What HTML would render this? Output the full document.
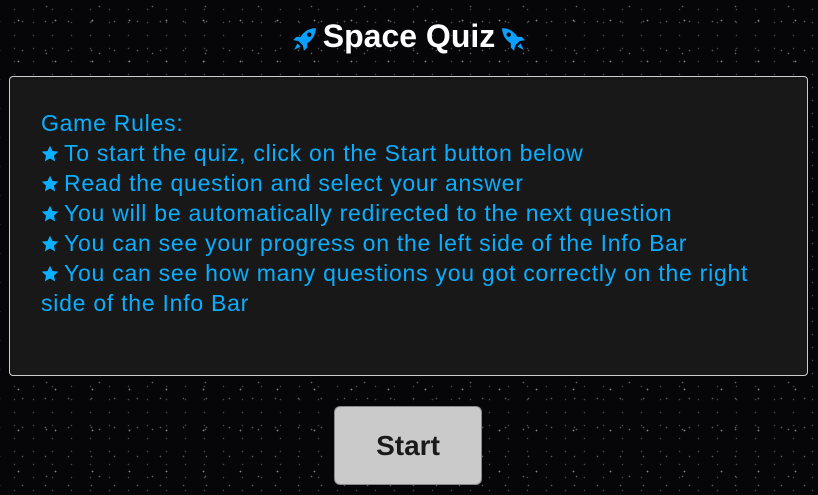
<!DOCTYPE html>
<html><head><meta charset="utf-8"><style>
html,body{margin:0;width:818px;height:495px;overflow:hidden;background:#060608;font-family:"Liberation Sans",Arial,sans-serif;position:relative}
.bg{position:absolute;inset:0;background-image:
radial-gradient(circle,#fff 0.7px,transparent 1px),
radial-gradient(circle,#aaa 0.6px,transparent 1px),
radial-gradient(circle,#888 0.5px,transparent 1px),
radial-gradient(circle,#bbb 0.6px,transparent 1px);
background-size:37px 41px,23px 29px,19px 13px,53px 47px;
background-position:0 0,11px 7px,5px 3px,20px 30px;opacity:.5}
h1{position:absolute;top:14px;left:0;width:818px;text-align:center;margin:0;color:#fff;font-size:32px;font-weight:bold;line-height:44px}
h1 svg{vertical-align:middle;margin:0 5px}
.box{position:absolute;left:9px;top:76px;width:797px;height:298px;background:#181818;border:1px solid #ccc;border-radius:4px}
.txt{position:absolute;left:31px;top:31px;width:735px;color:#0aaeff;font-size:23px;letter-spacing:0.75px;line-height:30px}
.star{display:inline-block;width:18px;height:18px;vertical-align:-2px;margin-right:5px}
.btn{position:absolute;left:334px;top:406px;width:146px;height:77px;background:#cacaca;border:1px solid #888;border-radius:6px;text-align:center;line-height:77px;font-size:28px;font-weight:bold;color:#1a1a1a}
</style></head><body>
<div class="bg"></div>
<h1><svg width="26" height="26" viewBox="0 0 24 24"><path fill="#0aa0ff" d="M22 2c-6 0-11 3-14 8l-4 0-3 3 5 1 4 4 1 5 3-3 0-4c5-3 8-8 8-14z"/><circle cx="16" cy="8" r="2" fill="#060608"/><path fill="#0aa0ff" d="M5 16l-3 6 6-3z"/></svg>Space Quiz<svg width="26" height="26" viewBox="0 0 24 24" style="transform:scaleX(-1)"><path fill="#0aa0ff" d="M22 2c-6 0-11 3-14 8l-4 0-3 3 5 1 4 4 1 5 3-3 0-4c5-3 8-8 8-14z"/><circle cx="16" cy="8" r="2" fill="#060608"/><path fill="#0aa0ff" d="M5 16l-3 6 6-3z"/></svg></h1>
<div class="box"><div class="txt">
Game Rules:<br>
<svg class="star" viewBox="0 0 24 24"><path fill="#0ab0ff" d="M12 1l3.3 7 7.7.9-5.7 5.3 1.5 7.6L12 18l-6.8 3.8 1.5-7.6L1 8.9 8.7 8z"/></svg>To start the quiz, click on the Start button below<br>
<svg class="star" viewBox="0 0 24 24"><path fill="#0ab0ff" d="M12 1l3.3 7 7.7.9-5.7 5.3 1.5 7.6L12 18l-6.8 3.8 1.5-7.6L1 8.9 8.7 8z"/></svg>Read the question and select your answer<br>
<svg class="star" viewBox="0 0 24 24"><path fill="#0ab0ff" d="M12 1l3.3 7 7.7.9-5.7 5.3 1.5 7.6L12 18l-6.8 3.8 1.5-7.6L1 8.9 8.7 8z"/></svg>You will be automatically redirected to the next question<br>
<svg class="star" viewBox="0 0 24 24"><path fill="#0ab0ff" d="M12 1l3.3 7 7.7.9-5.7 5.3 1.5 7.6L12 18l-6.8 3.8 1.5-7.6L1 8.9 8.7 8z"/></svg>You can see your progress on the left side of the Info Bar<br>
<svg class="star" viewBox="0 0 24 24"><path fill="#0ab0ff" d="M12 1l3.3 7 7.7.9-5.7 5.3 1.5 7.6L12 18l-6.8 3.8 1.5-7.6L1 8.9 8.7 8z"/></svg>You can see how many questions you got correctly on the right<br>side of the Info Bar
</div></div>
<div class="btn">Start</div>
</body></html>
